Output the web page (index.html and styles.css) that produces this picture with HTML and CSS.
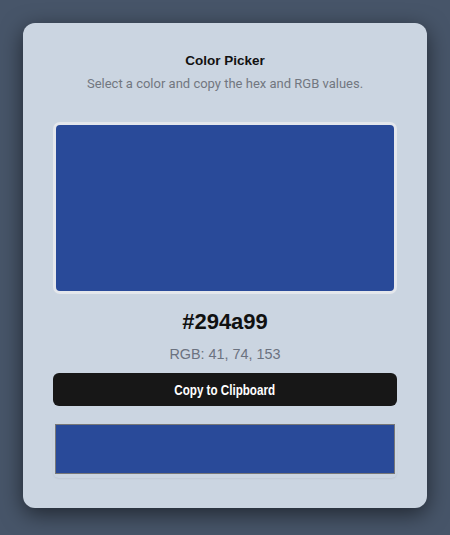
FILE: index.html
```html
<!DOCTYPE html>
<html lang="en">
<head>
<meta charset="utf-8">
<title>Color Picker</title>
<link rel="stylesheet" href="styles.css">
</head>
<body>
  <main class="card">
    <h1 class="title">Color Picker</h1>
    <p class="subtitle">Select a color and copy the hex and RGB values.</p>
    <div class="swatch"><div class="swatch-fill"></div></div>
    <div class="hex">#294a99</div>
    <div class="rgb">RGB: 41, 74, 153</div>
    <button class="copy-btn" type="button"><span class="copy-label">Copy to Clipboard</span></button>
    <div class="color-input"><div class="color-input-swatch"></div></div>
  </main>
</body>
</html>
```
FILE: styles.css
```css
html, body {
  margin: 0;
  height: 100%;
}
body {
  background: #475569;
  display: flex;
  justify-content: center;
  align-items: flex-start;
  padding-top: 23px;
  box-sizing: border-box;
  font-family: "Liberation Sans", Arial, sans-serif;
}
.card {
  width: 404px;
  height: 485px;
  box-sizing: border-box;
  background: #cbd5e1;
  border-radius: 12px;
  padding: 30px 30px 30px;
  box-shadow: 0 6px 22px rgba(0, 0, 0, 0.55);
  display: flex;
  flex-direction: column;
  align-items: stretch;
}
.title {
  margin: 0;
  font-size: 13.5px;
  line-height: 16px;
  font-weight: 700;
  color: #111111;
  text-align: center;
}
.subtitle {
  margin: 6px 0 0;
  font-family: Roboto, "Liberation Sans", sans-serif;
  font-size: 13px;
  line-height: 18px;
  color: #727780;
  text-align: center;
}
.swatch {
  margin-top: 29px;
  height: 172px;
  box-sizing: border-box;
  border: 3px solid #e4e7ec;
  border-radius: 7px;
  background: #e4e7ec;
}
.swatch-fill {
  height: 100%;
  background: #294a99;
  border-radius: 4px;
}
.hex {
  margin-top: 15px;
  font-size: 22px;
  line-height: 26px;
  font-weight: 700;
  color: #111111;
  text-align: center;
}
.rgb {
  margin-top: 9px;
  font-size: 14.4px;
  line-height: 20px;
  color: #6b7280;
  text-align: center;
}
.copy-btn {
  margin-top: 9px;
  height: 33px;
  border: none;
  border-radius: 6px;
  background: #171717;
  color: #ffffff;
  font-family: "Liberation Sans", Arial, sans-serif;
  font-size: 14px;
  font-weight: 700;
  padding: 0;
  display: flex;
  align-items: center;
  justify-content: center;
}
.copy-label {
  display: inline-block;
  transform: scaleX(0.83);
}
.color-input {
  margin-top: 16px;
  height: 56px;
  box-sizing: border-box;
  padding: 2px;
  border-radius: 6px;
  box-shadow: 0 1px 2px rgba(0, 0, 0, 0.06);
}
.color-input-swatch {
  height: 50px;
  box-sizing: border-box;
  border: 1px solid #777777;
  background: #294a99;
}
```
